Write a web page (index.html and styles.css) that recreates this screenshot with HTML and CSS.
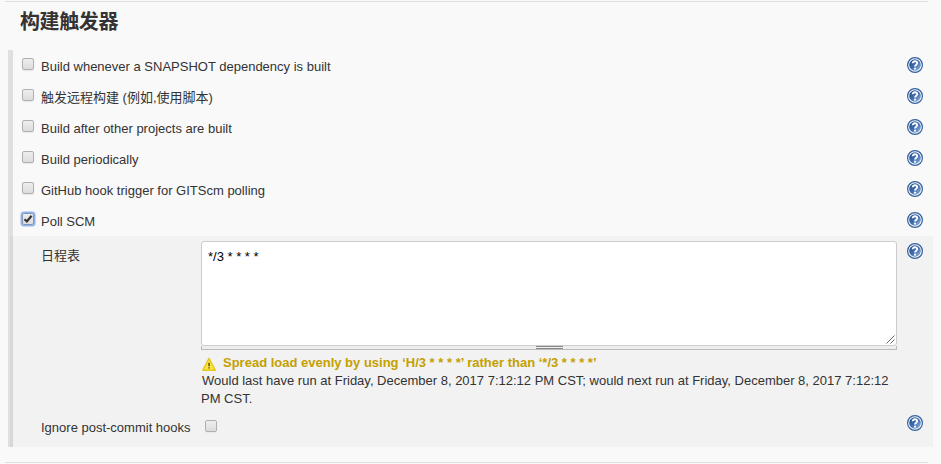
FILE: index.html
```html
<!DOCTYPE html>
<html lang="zh-CN">
<head>
<meta charset="utf-8">
<title>构建触发器</title>
<link rel="stylesheet" href="styles.css">
</head>
<body>
<svg class="defs" width="0" height="0" aria-hidden="true">
  <defs>
    <linearGradient id="blue" x1="0" y1="0" x2="1" y2="1">
      <stop offset="0" stop-color="#204a87"/>
      <stop offset=".5" stop-color="#3f6dae"/>
      <stop offset="1" stop-color="#a0bbdd"/>
    </linearGradient>
    <symbol id="help" viewBox="0 0 16 16">
      <circle cx="8" cy="8" r="7.4" fill="#f5f9fd" stroke="#33609c" stroke-width="1.2"/>
      <circle cx="8" cy="8" r="5.8" fill="url(#blue)"/>
      <path d="M5.7 6.2C5.7 3.5 10.4 3.6 10.2 6.2C10.1 7.6 8 7.8 8 9.6" fill="none" stroke="#fff" stroke-width="1.9"/>
      <path d="M7 10.7h2v1.9H7z" fill="#fff"/>
    </symbol>
  </defs>
</svg>
<main class="section">
  <h1 class="title">构建触发器</h1>
  <div class="group">
    <div class="row"><span class="box"></span><span class="label">Build whenever a SNAPSHOT dependency is built</span><svg class="help"><use href="#help"/></svg></div>
    <div class="row"><span class="box"></span><span class="label">触发远程构建 (例如,使用脚本)</span><svg class="help"><use href="#help"/></svg></div>
    <div class="row"><span class="box"></span><span class="label">Build after other projects are built</span><svg class="help"><use href="#help"/></svg></div>
    <div class="row"><span class="box"></span><span class="label">Build periodically</span><svg class="help"><use href="#help"/></svg></div>
    <div class="row"><span class="box"></span><span class="label">GitHub hook trigger for GITScm polling</span><svg class="help"><use href="#help"/></svg></div>
    <div class="row"><span class="box checked"><svg viewBox="0 0 10 10"><path d="M1.5 5.2L3.9 7.5L8.6 1.8" fill="none" stroke="#333" stroke-width="2.2"/></svg></span><span class="label">Poll SCM</span><svg class="help"><use href="#help"/></svg></div>
    <div class="panel">
      <div class="schedule">
        <span class="name">日程表</span>
        <div class="field">
          <div class="textarea">*/3 * * * *<svg class="corner" viewBox="0 0 9 9"><path d="M.5 8.5l8-8M4.5 8.5l4-4" stroke="#666" fill="none"/></svg></div>
          <div class="handle"><span class="grip"></span></div>
          <div class="warning"><svg class="warn" viewBox="0 0 16 16"><path d="M8 2.3L14.3 14.3H1.7Z" fill="#fbe43c" stroke="#e6c81e" stroke-width="1.4" stroke-linejoin="round"/><path d="M7.2 6.8h1.7v3.5H7.2zM7.2 11.2h1.7v1.3H7.2z" fill="#6b611e"/></svg><span>Spread load evenly by using ‘H/3 * * * *’ rather than ‘*/3 * * * *’</span></div>
          <div class="message"><span class="first">Would last have run at Friday, December 8, 2017 7:12:12 PM CST; would next run at Friday, December 8, 2017 7:12:12</span><br><span>PM CST.</span></div>
        </div>
        <svg class="help"><use href="#help"/></svg>
      </div>
      <div class="hooks"><span class="name">Ignore post-commit hooks</span><span class="box"></span><svg class="help"><use href="#help"/></svg></div>
    </div>
  </div>
</main>
</body>
</html>
```

FILE: styles.css
```css
* { box-sizing: border-box; }
body {
  margin: 0;
  height: 464px;
  overflow: hidden;
  background: #f9f9f9;
  color: #333;
  font: 13px/18px "Liberation Sans", "Noto Sans CJK SC", sans-serif;
}
.defs { display: block; width: 0; height: 0; }
.section { padding: 1px 0 0 5px; }
.section::after {
  content: "";
  display: block;
  width: 923px;
  height: 1px;
  margin-top: 15px;
  background: #ddd;
}
.title {
  width: 923px;
  height: 49px;
  margin: 0;
  padding: 5px 0 0 15px;
  border-top: 1px solid #ddd;
  font: bold 20px/30px "Liberation Sans", "Noto Sans CJK SC", sans-serif;
  letter-spacing: -.4px;
}
.group {
  width: 925px;
  height: 397px;
  margin-left: 3px;
  border-left: 5px solid #e0e0e0;
}
.row {
  display: flex;
  align-items: flex-start;
  height: 31px;
  padding: 7px 10px 0 9px;
}
.box {
  flex: none;
  width: 12px;
  height: 12px;
  margin-top: 1px;
  border: 1px solid #b0b0b0;
  border-radius: 2px;
  background: linear-gradient(#eee, #dcdcdc);
  box-shadow: 0 1px 1px #e8e8e8;
}
.checked {
  border-color: #8795b0;
  box-shadow: 0 0 0 1.5px #8db4f0;
}
.checked svg { display: block; width: 10px; height: 10px; }
.label { margin: 1px 0 0 7px; white-space: nowrap; }
.help { flex: none; width: 16px; height: 16px; margin-left: auto; }
.panel {
  height: 211px;
  margin-left: -3px;
  border-left: 3px solid #d8d8d8;
  background: #f2f2f2;
}
.schedule {
  display: flex;
  height: 179px;
  padding: 5px 10px 0 28px;
}
.name { width: 160px; padding-top: 6px; white-space: nowrap; }
.schedule .help { margin-top: 2px; }
.field { width: 696px; }
.textarea {
  position: relative;
  height: 105px;
  padding: 6px;
  border: 1px solid #ccc;
  border-radius: 3px;
  background: #fff;
  color: #000;
}
.corner { position: absolute; right: 1px; bottom: 1px; width: 9px; height: 9px; }
.handle {
  display: flex;
  justify-content: center;
  height: 4px;
  border: 1px solid #bbb;
  border-top: 0;
  background: #eee;
}
.grip { width: 27px; height: 3px; border: solid #888; border-width: 1px 0; }
.warning {
  display: flex;
  height: 22px;
  padding-top: 4px;
  color: #c4a000;
  font-weight: bold;
  white-space: nowrap;
}
.warn { width: 16px; height: 16px; margin: 2px 6px 0 0; }
.message { white-space: nowrap; }
.first { margin-left: 1px; }
.hooks { display: flex; height: 32px; padding: 0 10px 0 28px; }
.hooks .name { width: 164px; padding-top: 4px; }
.hooks .box { margin-top: 5px; }
```
